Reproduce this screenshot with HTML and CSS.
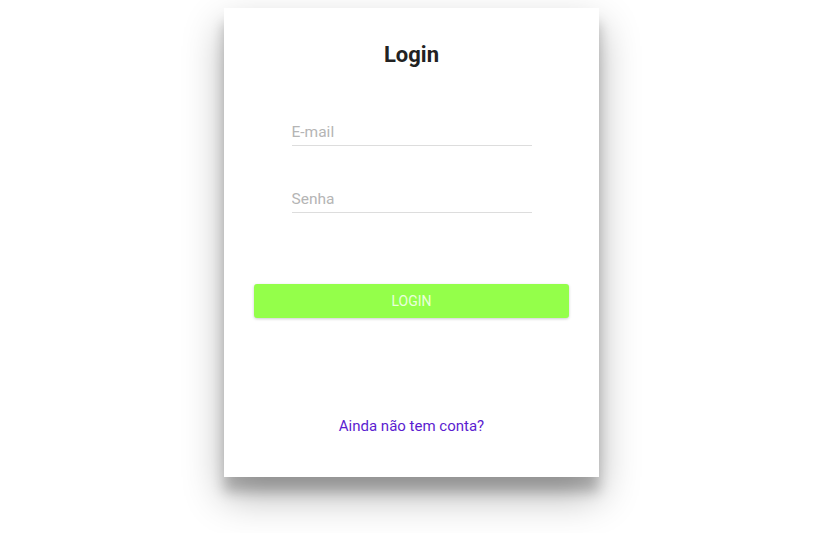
FILE: index.html
```html
<!DOCTYPE html>
<html lang="pt">
<head>
<meta charset="utf-8">
<title>Login</title>
<link rel="stylesheet" href="styles.css">
</head>
<body>
<div class="page">
  <div class="card">
    <h1 class="title">Login</h1>
    <form class="form">
      <div class="fields">
        <input class="field" type="email" placeholder="E-mail">
        <input class="field" type="password" placeholder="Senha">
      </div>
      <button class="btn" type="button">LOGIN</button>
    </form>
    <a class="link" href="#">Ainda não tem conta?</a>
  </div>
</div>
</body>
</html>
```

FILE: styles.css
```css
* { box-sizing: border-box; }
html, body { margin: 0; background: #fff; }
body { font-family: Roboto, "Liberation Sans", sans-serif; }
.page {
  display: flex;
  justify-content: center;
  align-items: flex-start;
  min-height: 100vh;
  padding: 8px 16px 0 0;
}
.card {
  width: 375px;
  height: 469px;
  background: #fff;
  box-shadow: 0 19px 38px rgba(0,0,0,0.30), 0 15px 12px rgba(0,0,0,0.22);
  display: flex;
  flex-direction: column;
  align-items: center;
  padding-top: 34px;
}
.title {
  margin: 0;
  font-size: 22px;
  line-height: 26px;
  font-weight: 700;
  color: #222;
}
.form {
  display: flex;
  flex-direction: column;
  align-items: center;
  width: 100%;
}
.fields {
  display: flex;
  flex-direction: column;
  gap: 37px;
  margin-top: 48px;
  width: 240px;
}
.field {
  width: 240px;
  height: 30px;
  border: none;
  border-bottom: 1px solid #ddd;
  padding: 2px 0 0;
  font-family: inherit;
  font-size: 15.5px;
  color: #333;
  outline: none;
  background: transparent;
}
.field::placeholder { color: #b5b5b5; }
.btn {
  margin-top: 71px;
  width: 315px;
  height: 34px;
  border: none;
  border-radius: 3px;
  background: #94ff4a;
  color: #eaffdc;
  font-family: inherit;
  font-size: 14px;
  font-weight: 400;
  box-shadow: 0 1px 3px rgba(0,0,0,0.2);
}
.link {
  margin-top: 99px;
  font-size: 15px;
  line-height: 19px;
  color: #5b1dd0;
  text-decoration: none;
}
```
